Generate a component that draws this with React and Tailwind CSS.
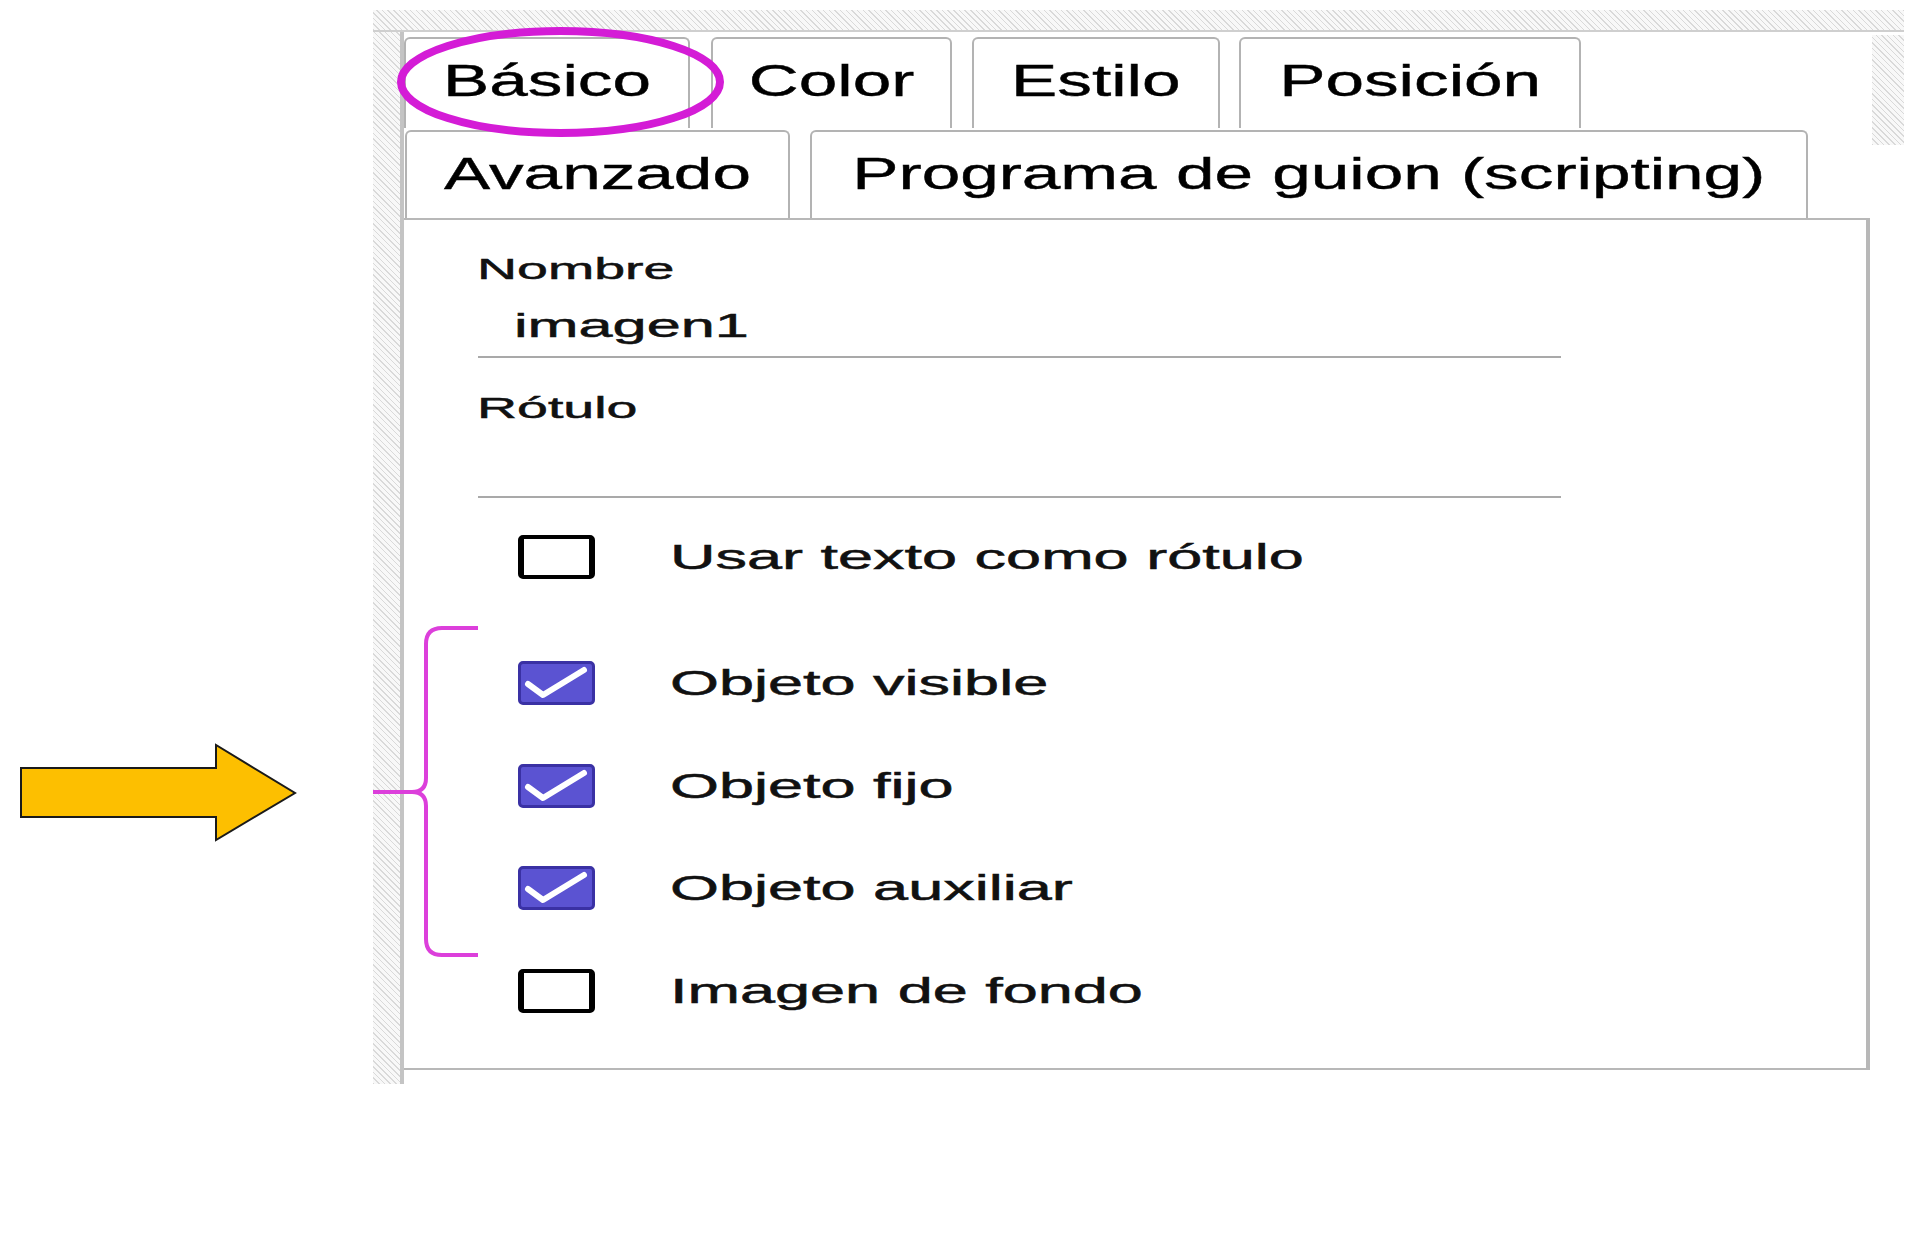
const HATCH =
  "bg-[repeating-linear-gradient(45deg,#d9d9d9_0px,#d9d9d9_1px,#f8f8f8_1px,#f8f8f8_4px)]";

function Tab({ label, className }) {
  return (
    <div
      className={
        "flex h-full items-center justify-center rounded-t-[6px] border-2 border-b-0 border-[#b3b3b3] bg-white " +
        className
      }
    >
      <span className="inline-block scale-x-[1.575] whitespace-nowrap text-[44px] leading-[49px] text-black [-webkit-text-stroke:0.4px_#000]">
        {label}
      </span>
    </div>
  );
}

function Check({ label, checked, className }) {
  return (
    <div className={"flex h-[44px] items-center " + className}>
      {checked ? (
        <div className="ml-[114px] h-[44px] w-[77px] shrink-0 rounded-[5px] border-[3px] border-[#3a31a4] bg-[#5b53d2]">
          <svg width="71" height="38" viewBox="0 0 71 38" className="block">
            <polyline
              points="7,20 22,31 63,6"
              fill="none"
              stroke="white"
              strokeWidth="6"
              strokeLinecap="round"
              strokeLinejoin="round"
            />
          </svg>
        </div>
      ) : (
        <div className="ml-[114px] h-[44px] w-[77px] shrink-0 rounded-[5px] border-x-[6px] border-y-[4px] border-black bg-white" />
      )}
      <span className="ml-[75px] inline-block origin-left scale-x-[1.8] whitespace-nowrap text-[35px] leading-[40px] text-[#111] [-webkit-text-stroke:0.5px_#111]">
        {label}
      </span>
    </div>
  );
}

export default function App() {
  return (
    <div className="relative h-[1257px] w-[1920px] overflow-hidden bg-white font-['Liberation_Sans',Arial,sans-serif]">
      <div className="pl-[373px] pt-[10px]">
        <div className="w-[1531px]">
          {/* top hatched strip */}
          <div className={"h-[22px] border-b-2 border-[#cfcfcf] " + HATCH} />
          <div className="flex">
            {/* left hatched strip */}
            <div className={"h-[1052px] w-[27px] shrink-0 " + HATCH} />
            {/* main area */}
            <div className="flex h-[1052px] border-l-[4px] border-[#c4c4c4]">
              <div className="flex w-[1468px] flex-col">
                {/* tabs row 1 */}
                <div className="mt-[5px] flex h-[91px] items-end">
                  <Tab label="Básico" className="w-[286px] pb-[6px]" />
                  <Tab label="Color" className="ml-[21px] w-[241px] pb-[6px]" />
                  <Tab label="Estilo" className="ml-[20px] w-[248px] pb-[6px]" />
                  <Tab label="Posición" className="ml-[19px] w-[342px] pb-[6px]" />
                </div>
                {/* tabs row 2 */}
                <div className="mt-[2px] flex h-[88px] items-end">
                  <Tab label="Avanzado" className="ml-[1px] w-[385px] pb-[4px]" />
                  <Tab
                    label="Programa de guion (scripting)"
                    className="ml-[20px] w-[998px] pb-[4px]"
                  />
                </div>
                {/* panel */}
                <div className="flex h-[852px] w-[1466px] flex-col border-b-2 border-r-[4px] border-t-2 border-[#b8b8b8] bg-white pt-[32px]">
                  <span className="ml-[73px] inline-block origin-left scale-x-[1.85] whitespace-nowrap text-[30px] leading-[34px] text-[#111] [-webkit-text-stroke:0.5px_#111]">
                    Nombre
                  </span>
                  <span className="ml-[110px] mt-[19px] inline-block origin-left scale-x-[1.8] whitespace-nowrap text-[34px] leading-[40px] text-[#111] [-webkit-text-stroke:0.5px_#111]">
                    imagen1
                  </span>
                  <div className="ml-[74px] mt-[11px] h-[2px] w-[1083px] bg-[#a9a9a9]" />
                  <span className="ml-[73px] mt-[33px] inline-block origin-left scale-x-[1.85] whitespace-nowrap text-[30px] leading-[34px] text-[#111] [-webkit-text-stroke:0.5px_#111]">
                    Rótulo
                  </span>
                  <div className="ml-[74px] mt-[71px] h-[2px] w-[1083px] bg-[#a9a9a9]" />
                  <Check label="Usar texto como rótulo" className="mt-[37px]" />
                  <Check label="Objeto visible" checked className="mt-[82px]" />
                  <Check label="Objeto fijo" checked className="mt-[59px]" />
                  <Check label="Objeto auxiliar" checked className="mt-[58px]" />
                  <Check label="Imagen de fondo" className="mt-[59px]" />
                </div>
              </div>
              {/* right hatched strip */}
              <div className={"mt-[3px] h-[110px] w-[32px] shrink-0 " + HATCH} />
            </div>
          </div>
        </div>
      </div>

      {/* magenta ellipse around Básico */}
      <svg
        className="absolute left-[390px] top-[20px]"
        width="345"
        height="125"
        viewBox="0 0 345 125"
      >
        <ellipse cx="170.5" cy="62" rx="159.5" ry="51" fill="none" stroke="#d41cd6" strokeWidth="8" />
      </svg>

      {/* magenta bracket */}
      <svg
        className="absolute left-[370px] top-[620px]"
        width="115"
        height="345"
        viewBox="0 0 115 345"
      >
        <path
          d="M108 8 L72 8 Q56 8 56 24 L56 158 Q56 172 42 172 L3 172 M42 172 Q56 172 56 186 L56 319 Q56 335 72 335 L108 335"
          fill="none"
          stroke="#dc3fdb"
          strokeWidth="4"
        />
      </svg>

      {/* yellow arrow */}
      <svg
        className="absolute left-[18px] top-[740px]"
        width="282"
        height="104"
        viewBox="0 0 282 104"
      >
        <polygon
          points="3,28 198,28 198,5 277,53 198,100 198,77 3,77"
          fill="#fdbf00"
          stroke="#1a1a1a"
          strokeWidth="2"
          strokeLinejoin="miter"
        />
      </svg>
    </div>
  );
}
